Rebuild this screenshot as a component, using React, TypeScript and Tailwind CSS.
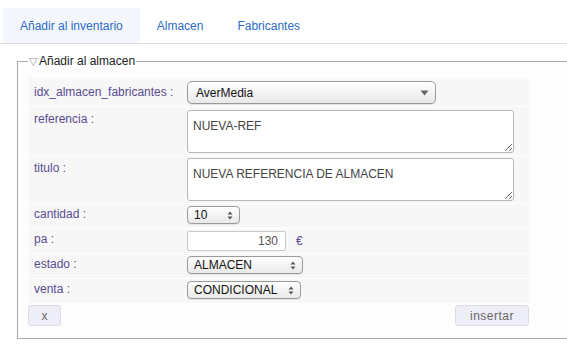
import React from 'react';

const font = { fontFamily: '"Liberation Sans", Arial, sans-serif' };

function UpDown() {
  return (
    <svg width="6" height="9" viewBox="0 0 6 9" className="shrink-0">
      <path d="M3 0.5 L5.5 3.5 L0.5 3.5 Z" fill="#555" />
      <path d="M3 8.5 L5.5 5.5 L0.5 5.5 Z" fill="#555" />
    </svg>
  );
}

function Down() {
  return (
    <svg width="9" height="6" viewBox="0 0 9 6" className="shrink-0">
      <path d="M0.5 0.5 L8.5 0.5 L4.5 5.5 Z" fill="#666" />
    </svg>
  );
}

interface SelectProps {
  value: string;
  className: string;
  big?: boolean;
}

function FakeSelect({ value, className, big }: SelectProps) {
  return (
    <div
      className={`flex items-center justify-between border border-[#9a9a9a] bg-linear-to-b from-white to-[#e9e9e9] text-[12px] text-[#111] shadow-[0_1px_0_rgba(0,0,0,0.08)] ${className}`}
    >
      <span className={big ? 'pl-[8px]' : 'pl-[6px]'}>{value}</span>
      <span className="pr-[6px]">{big ? <Down /> : <UpDown />}</span>
    </div>
  );
}

function Row({ label, h, children }: { label: string; h: string; children: React.ReactNode }) {
  return (
    <div className={`flex bg-[#f7f7f7] ${h}`}>
      <div className="w-[158px] shrink-0 pl-[5px] text-[12px] leading-[16px] text-[#5a4c92]">{label}</div>
      <div className="flex-1">{children}</div>
    </div>
  );
}

export default function App() {
  return (
    <div className="w-[567px] h-[357px] overflow-hidden bg-white" style={font}>
      {/* tabs */}
      <div className="flex pt-[8px] pl-[3px] border-b border-[#dddddd]">
        <div className="h-[35px] flex items-center px-[17px] bg-[#f3f7fc] text-[12px] text-[#2d6bc5]">
          Añadir al inventario
        </div>
        <div className="h-[35px] flex items-center px-[17px] text-[12px] text-[#2d6bc5]">Almacen</div>
        <div className="h-[35px] flex items-center px-[17px] text-[12px] text-[#2d6bc5]">Fabricantes</div>
      </div>

      <fieldset className="ml-[17px] mt-[9px] w-[620px] border border-[#a8a8a8] pl-[11px] pr-0 pt-[9px] pb-[12px] bg-[#fdfdfd]">
        <legend className="-ml-[1px] px-[1px] text-[12px] leading-[16px] text-[#222]">
          <span className="text-[#999] text-[11px] mr-[2px]">▽</span>Añadir al almacen
        </legend>

        <div className="w-[500px] flex flex-col gap-[1px] bg-white">
          <Row label="idx_almacen_fabricantes :" h="h-[28px] pt-[6px]">
            <div className="-mt-[3px]">
              <FakeSelect value="AverMedia" big className="w-[249px] h-[23px] rounded-[5px]" />
            </div>
          </Row>
          <Row label="referencia :" h="h-[48px] pt-[4px]">
            <textarea
              readOnly
              defaultValue="NUEVA-REF"
              className="block -mt-[1px] w-[327px] h-[43px] border border-[#b8b8b8] rounded-[3px] bg-white px-[5px] pt-[7px] text-[12px] leading-[16px] text-[#444] outline-none"
              style={font}
            />
          </Row>
          <Row label="titulo :" h="h-[47px] pt-[4px]">
            <textarea
              readOnly
              defaultValue="NUEVA REFERENCIA DE ALMACEN"
              className="block -mt-[2px] w-[327px] h-[43px] border border-[#b8b8b8] rounded-[3px] bg-white px-[5px] pt-[7px] text-[12px] leading-[16px] text-[#444] outline-none"
              style={font}
            />
          </Row>
          <Row label="cantidad :" h="h-[24px] pt-[2px]">
            <FakeSelect value="10" className="w-[53px] h-[18px] rounded-[4px]" />
          </Row>
          <Row label="pa :" h="h-[24px] pt-[2px]">
            <div className="flex items-center">
              <input
                readOnly
                value="130"
                className="w-[99px] h-[20px] border border-[#c8c8c8] rounded-[2px] bg-white pr-[7px] text-right text-[12px] text-[#555] outline-none"
                style={font}
              />
              <span className="ml-[10px] text-[12px] text-[#5a4c92]">€</span>
            </div>
          </Row>
          <Row label="estado :" h="h-[24px] pt-[2px]">
            <FakeSelect value="ALMACEN" className="w-[116px] h-[18px] rounded-[4px]" />
          </Row>
          <Row label="venta :" h="h-[24px] pt-[2px]">
            <FakeSelect value="CONDICIONAL" className="w-[114px] h-[18px] rounded-[4px]" />
          </Row>
        </div>

        <div className="w-[501px] -ml-[1px] mt-[2px] flex justify-between">
          <button className="w-[33px] h-[21px] rounded-[3px] border border-[#dcdce6] bg-[#eeeef9] text-[12px] text-[#666]">
            x
          </button>
          <button className="w-[74px] h-[21px] rounded-[3px] border border-[#dcdce6] bg-[#eeeef9] text-[12px] tracking-[0.5px] text-[#666]">
            insertar
          </button>
        </div>
      </fieldset>
    </div>
  );
}
